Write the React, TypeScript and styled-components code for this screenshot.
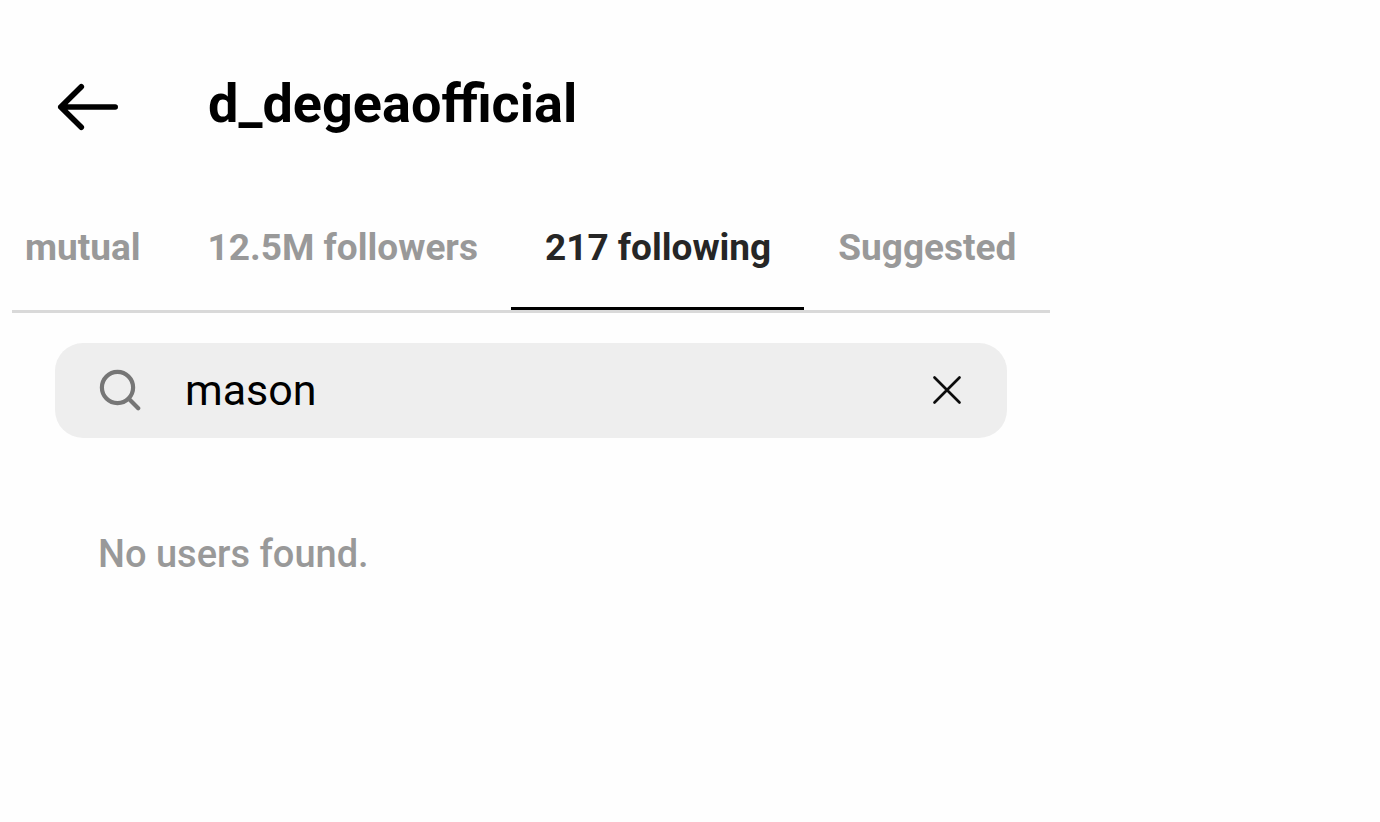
import React, { useState } from "react";
import styled, { createGlobalStyle } from "styled-components";

const GlobalStyle = createGlobalStyle`
  * {
    box-sizing: border-box;
  }
  body {
    margin: 0;
    background: #fefefe;
    font-family: Roboto, "Liberation Sans", sans-serif;
  }
  button,
  input {
    font-family: inherit;
    border: 0;
    padding: 0;
    background: none;
  }
  button {
    cursor: pointer;
  }
`;

const Screen = styled.main`
  width: 100%;
  max-width: 1050px;
`;

const Header = styled.header`
  display: flex;
  align-items: flex-start;
  gap: 88px;
  padding: 72px 56px 0;
`;

const BackButton = styled.button`
  display: flex;
  align-items: center;
  height: 70px;
`;

const Title = styled.h1`
  margin: 0;
  font-size: 54px;
  line-height: 64px;
  font-weight: 700;
  color: #000;
`;

const Tabs = styled.nav`
  display: flex;
  margin: 58px 0 0 12px;
  border-bottom: 3px solid #d9d9d9;
`;

const Tab = styled.button<{ $active: boolean }>`
  height: 110px;
  padding: 26px 33px 37px 34px;
  border-bottom: 3px solid ${(p) => (p.$active ? "#000" : "transparent")};
  color: ${(p) => (p.$active ? "#262626" : "#999")};
  font-size: 37px;
  line-height: 44px;
  font-weight: 700;
  white-space: nowrap;

  &:first-child {
    padding-left: 13px;
  }
`;

const SearchBar = styled.div`
  display: flex;
  align-items: center;
  height: 95px;
  margin: 30px 43px 0 55px;
  padding: 0 45px 2px 44px;
  border-radius: 28px;
  background: #eee;
`;

const SearchLabel = styled.label`
  display: flex;
  flex-shrink: 0;
  margin-right: 44px;
`;

const SearchInput = styled.input`
  flex: 1;
  min-width: 0;
  font-size: 43px;
  line-height: 52px;
  color: #000;
  outline: none;
`;

const ClearButton = styled.button`
  display: flex;
`;

const EmptyMessage = styled.p`
  margin: 94px 0 0;
  padding: 0 98px;
  font-size: 38px;
  line-height: 44px;
  font-weight: 500;
  color: #999;
`;

const tabs = ["mutual", "12.5M followers", "217 following", "Suggested"];

export default function App() {
  const [active, setActive] = useState("217 following");
  const [query, setQuery] = useState("mason");

  return (
    <Screen>
      <GlobalStyle />
      <Header>
        <BackButton type="button" aria-label="Back">
          <svg width="64" height="50" viewBox="0 0 64 50" fill="none" stroke="#000" strokeWidth="5.6" strokeLinecap="round" strokeLinejoin="round">
            <path d="M25.3 4.7 4.8 25 25.3 45.3M4.8 25H59.2" />
          </svg>
        </BackButton>
        <Title>d_degeaofficial</Title>
      </Header>
      <Tabs>
        {tabs.map((name) => (
          <Tab key={name} type="button" $active={name === active} onClick={() => setActive(name)}>
            {name}
          </Tab>
        ))}
      </Tabs>
      <SearchBar>
        <SearchLabel htmlFor="user-search" aria-label="Search">
          <svg width="42" height="42" viewBox="0 0 42 42" fill="none" stroke="#767676" strokeWidth="4.2" strokeLinecap="round">
            <circle cx="18.5" cy="18.5" r="15.6" />
            <path d="M29.8 29.8 39.2 39.2" />
          </svg>
        </SearchLabel>
        <SearchInput id="user-search" type="text" value={query} onChange={(e) => setQuery(e.target.value)} />
        <ClearButton type="button" aria-label="Clear search" onClick={() => setQuery("")}>
          <svg width="30" height="30" viewBox="0 0 30 30" fill="none" stroke="#0c0c0c" strokeWidth="2.7" strokeLinecap="round">
            <path d="M2.5 2.5 27.5 27.5M27.5 2.5 2.5 27.5" />
          </svg>
        </ClearButton>
      </SearchBar>
      <EmptyMessage>No users found.</EmptyMessage>
    </Screen>
  );
}
